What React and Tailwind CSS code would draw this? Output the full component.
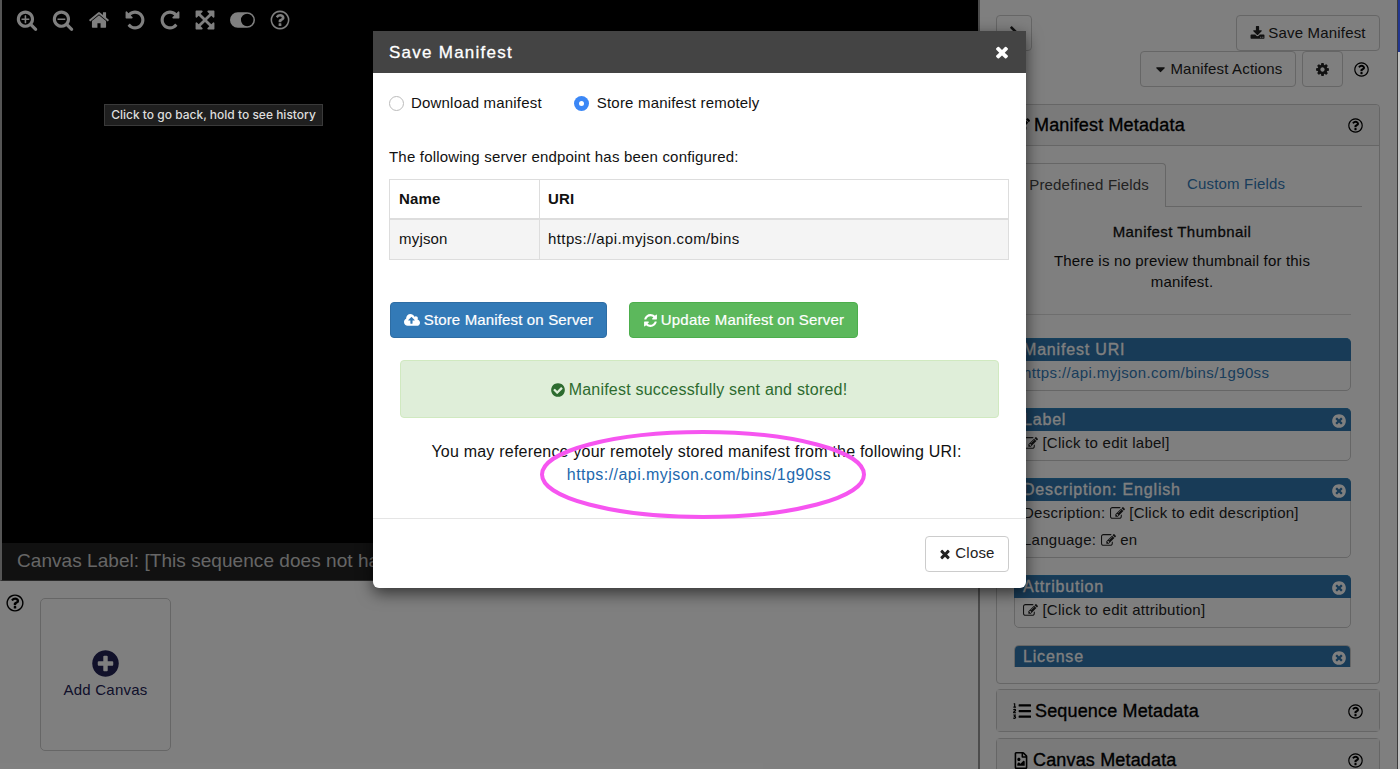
import React from "react";
import { FaListOl, FaRegFileImage, FaChevronRight } from "react-icons/fa";

const DISC =
  "M1664 896q0 209-103 385.5t-279.5 279.5-385.5 103-385.5-103-279.5-279.5-103-385.5 103-385.5 279.5-279.5 385.5-103 385.5 103 279.5 279.5 103 385.5z";
const LENS =
  "M1216 832q0-185-131.5-316.5t-316.5-131.5-316.5 131.5-131.5 316.5 131.5 316.5 316.5 131.5 316.5-131.5 131.5-316.5zm512 832q0 53-37.5 90.5t-90.5 37.5q-54 0-90-38l-343-342q-179 124-399 124-143 0-273.5-55.5t-225-150-150-225-55.5-273.5 55.5-273.5 150-225 225-150 273.5-55.5 273.5 55.5 225 150 150 225 55.5 273.5q0 220-124 399l343 343q37 37 37 90z";

const PATHS = {
  zoomIn:
    "M1088 800v64q0 13-9.5 22.5t-22.5 9.5h-224v224q0 13-9.5 22.5t-22.5 9.5h-64q-13 0-22.5-9.5t-9.5-22.5v-224h-224q-13 0-22.5-9.5t-9.5-22.5v-64q0-13 9.5-22.5t22.5-9.5h224v-224q0-13 9.5-22.5t22.5-9.5h64q13 0 22.5 9.5t9.5 22.5v224h224q13 0 22.5 9.5t9.5 22.5z" + LENS,
  zoomOut:
    "M1088 800v64q0 13-9.5 22.5t-22.5 9.5h-576q-13 0-22.5-9.5t-9.5-22.5v-64q0-13 9.5-22.5t22.5-9.5h576q13 0 22.5 9.5t9.5 22.5z" + LENS,
  home:
    "M1472 992v480q0 26-19 45t-45 19h-384v-384h-256v384h-384q-26 0-45-19t-19-45v-480q0-1 .5-3t.5-3l575-474 575 474q1 2 1 6zm223-69l-62 74q-8 9-21 11h-3q-13 0-21-7l-692-577-692 577q-12 8-24 7-13-2-21-11l-62-74q-8-10-7-23.5t11-21.5l719-599q32-26 76-26t76 26l244 204v-195q0-14 9-23t23-9h192q14 0 23 9t9 23v408l219 182q10 8 11 21.5t-7 23.5z",
  undo:
    "M1664 896q0 156-61 298t-164 245-245 164-298 61q-172 0-327-72.5t-264-204.5q-7-10-6.5-22.5t8.5-20.5l137-138q10-9 25-9 16 2 23 12 73 95 179 147t225 52q104 0 198.5-40.5t163.5-109.5 109.5-163.5 40.5-198.5-40.5-198.5-109.5-163.5-163.5-109.5-198.5-40.5q-98 0-188 35.5t-160 101.5l137 138q31 30 14 69-17 40-59 40h-448q-26 0-45-19t-19-45v-448q0-42 40-59 39-17 69 14l130 129q107-101 244.5-156.5t284.5-55.5q156 0 298 61t245 164 164 245 61 298z",
  redo:
    "M1664 256v448q0 26-19 45t-45 19h-448q-42 0-59-40-17-39 14-69l138-138q-148-137-349-137-104 0-198.5 40.5t-163.5 109.5-109.5 163.5-40.5 198.5 40.5 198.5 109.5 163.5 163.5 109.5 198.5 40.5q119 0 225-52t179-147q7-10 23-12 15 0 25 9l137 138q9 8 9.5 20.5t-7.5 22.5q-109 132-264 204.5t-327 72.5q-156 0-298-61t-245-164-164-245-61-298 61-298 164-245 245-164 298-61q147 0 284.5 55.5t244.5 156.5l130-129q29-31 70-14 39 17 39 59z",
  expand:
    "M1411 541l-355 355 355 355 144-144q29-31 70-14 39 17 39 59v448q0 26-19 45t-45 19h-448q-42 0-59-40-17-39 14-69l144-144-355-355-355 355 144 144q31 30 14 69-17 40-59 40h-448q-26 0-45-19t-19-45v-448q0-42 40-59 39-17 69 14l144 144 355-355-355-355-144 144q-19 19-45 19-12 0-24-5-40-17-40-59v-448q0-26 19-45t45-19h448q42 0 59 40 17 39-14 69l-144 144 355 355 355-355-144-144q-31-30-14-69 17-40 59-40h448q26 0 45 19t19 45v448q0 42-39 59-13 5-25 5-26 0-45-19z",
  help:
    "M1008 1200v160q0 14-9 23t-23 9h-160q-14 0-23-9t-9-23v-160q0-14 9-23t23-9h160q14 0 23 9t9 23zm256-496q0 50-15 90t-45.5 69-52 44-59.5 36q-32 18-46.5 28t-26 24-11.5 29v32q0 14-9 23t-23 9h-160q-14 0-23-9t-9-23v-68q0-35 10.5-64.5t24-47.5 39-35.5 41-25.5 44.5-21q53-25 75-43t22-49q0-42-43.5-71.5t-95.5-29.5q-56 0-95 27-29 20-80 83-9 12-25 12-11 0-19-6l-108-82q-10-7-12-20t5-23q122-192 349-192 129 0 238.5 89.5t109.5 214.5zm-368-448q-130 0-248.5 51t-204 136.5-136.5 204-51 248.5 51 248.5 136.5 204 204 136.5 248.5 51 248.5-51 204-136.5 136.5-204 51-248.5-51-248.5-136.5-204-204-136.5-248.5-51z" + DISC,
  times:
    "M1490 1322q0 40-28 68l-136 136q-28 28-68 28t-68-28l-294-294-294 294q-28 28-68 28t-68-28l-136-136q-28-28-28-68t28-68l294-294-294-294q-28-28-28-68t28-68l136-136q28-28 68-28t68 28l294 294 294-294q28-28 68-28t68 28l136 136q28 28 28 68t-28 68l-294 294 294 294q28 28 28 68z",
  timesCircle:
    "M1277 1122q0-26-19-45l-181-181 181-181q19-19 19-45 0-27-19-46l-90-90q-19-18-46-18-26 0-45 18l-181 181-181-181q-19-18-45-18-27 0-46 18l-90 90q-19 19-19 46 0 26 19 45l181 181-181 181q-19 19-19 45 0 27 19 46l90 90q19 18 46 18 26 0 45-18l181-181 181 181q19 18 45 18 27 0 46-18l90-90q19-19 19-46z" + DISC,
  checkCircle:
    "M1412 734q0-28-18-46l-91-90q-19-19-45-19t-45 19l-408 407-226-226q-19-19-45-19t-45 19l-91 90q-18 18-18 46 0 27 18 45l362 362q19 19 45 19 27 0 46-19l543-543q18-18 18-45z" + DISC,
  plusCircle:
    "M1344 960v-128q0-26-19-45t-45-19h-256v-256q0-26-19-45t-45-19h-128q-26 0-45 19t-19 45v256h-256q-26 0-45 19t-19 45v128q0 26 19 45t45 19h256v256q0 26 19 45t45 19h128q26 0 45-19t19-45v-256h256q26 0 45-19t19-45z" + DISC,
  download:
    "M1344 1344q0-26-19-45t-45-19-45 19-19 45 19 45 45 19 45-19 19-45zm256 0q0-26-19-45t-45-19-45 19-19 45 19 45 45 19 45-19 19-45zm128-224v320q0 40-28 68t-68 28h-1472q-40 0-68-28t-28-68v-320q0-40 28-68t68-28h465l135 136q58 56 136 56t136-56l136-136h464q40 0 68 28t28 68zm-325-569q17 41-14 70l-448 448q-18 19-45 19t-45-19l-448-448q-31-29-14-70 17-39 59-39h256v-448q0-26 19-45t45-19h256q26 0 45 19t19 45v448h256q42 0 59 39z",
  cog:
    "M1152 896q0-106-75-181t-181-75-181 75-75 181 75 181 181 75 181-75 75-181zm512-109v222q0 12-8 23t-20 13l-185 28q-19 54-39 91 35 50 107 138 10 12 10 25t-9 23q-27 37-99 108t-94 71q-12 0-26-9l-138-108q-44 23-91 38-16 136-29 186-7 28-36 28h-222q-14 0-24.5-8.5t-11.5-21.5l-28-184q-49-16-90-37l-141 107q-10 9-25 9-14 0-25-11-126-114-165-168-7-10-7-23 0-12 8-23 15-21 51-66.5t54-70.5q-27-50-41-99l-183-27q-13-2-21-12.5t-8-23.5v-222q0-12 8-23t19-13l186-28q14-46 39-92-40-57-107-138-10-12-10-24 0-10 9-23 26-36 98.5-107.5t94.5-71.5q13 0 26 10l138 107q44-23 91-38 16-136 29-186 7-28 36-28h222q14 0 24.5 8.5t11.5 21.5l28 184q49 16 90 37l142-107q9-9 24-9 13 0 25 10 129 119 165 170 7 8 7 22 0 12-8 23-15 21-51 66.5t-54 70.5q26 50 41 98l183 28q13 2 21 12.5t8 23.5z",
  refresh:
    "M1639 1056q0 5-1 7-64 268-268 434.5t-478 166.5q-146 0-282.5-55t-243.5-157l-129 129q-19 19-45 19t-45-19-19-45v-448q0-26 19-45t45-19h448q26 0 45 19t19 45-19 45l-137 137q71 66 161 102t187 36q134 0 250-65t186-179q11-17 53-117 8-23 30-23h192q13 0 22.5 9.5t9.5 22.5zm25-800v448q0 26-19 45t-45 19h-448q-26 0-45-19t-19-45 19-45l138-138q-148-137-349-137-134 0-250 65t-186 179q-11 17-53 117-8 23-30 23h-199q-13 0-22.5-9.5t-9.5-22.5v-7q65-268 270-434.5t480-166.5q146 0 284 55.5t245 156.5l130-129q19-19 45-19t45 19 19 45z",
  cloud:
    "M1280 864q0-14-9-23l-352-352q-9-9-23-9t-23 9l-351 351q-10 12-10 24 0 14 9 23t23 9h224v352q0 13 9.5 22.5t22.5 9.5h192q13 0 22.5-9.5t9.5-22.5v-352h224q13 0 22.5-9.5t9.5-22.5zm640 288q0 159-112.5 271.5t-271.5 112.5h-1088q-185 0-316.5-131.5t-131.5-316.5q0-130 70-240t188-165q-2-30-2-43 0-212 150-362t362-150q156 0 285.5 87t188.5 231q71-62 166-62 106 0 181 75t75 181q0 76-41 138 130 31 213.5 135.5t83.5 238.5z",
  edit:
    "M888 1184l116-116-152-152-116 116v56h96v96h56zm440-720q-16-16-33 1l-350 350q-17 17-1 33t33-1l350-350q17-17 1-33zm80 594v190q0 119-84.5 203.5t-203.5 84.5h-832q-119 0-203.5-84.5t-84.5-203.5v-832q0-119 84.5-203.5t203.5-84.5h832q63 0 117 25 15 7 18 23 3 17-9 29l-49 49q-14 14-32 8-23-6-45-6h-832q-66 0-113 47t-47 113v832q0 66 47 113t113 47h832q66 0 113-47t47-113v-126q0-13 9-22l64-64q15-15 35-7t20 29zm-96-738l288 288-672 672h-288v-288zm444 132l-92 92-288-288 92-92q28-28 68-28t68 28l152 152q28 28 28 68t-28 68z",
  toggle:
    "M640 256h768a640 640 0 0 1 0 1280h-768a640 640 0 0 1 0-1280zM1408 384a512 512 0 1 0 0 1024a512 512 0 1 0 0-1024z",
  caret:
    "M1408 704q0 26-19 45l-448 448q-19 19-45 19t-45-19l-448-448q-19-19-19-45t19-45 45-19h896q26 0 45 19t19 45z",
};

function Icon({ name, className = "", w = 1792 }) {
  return (
    <svg viewBox={`0 0 ${w} 1792`} fill="currentColor" fillRule="evenodd" className={`shrink-0 overflow-visible ${className}`}>
      <path d={PATHS[name]} />
    </svg>
  );
}

const btn = "flex h-9 items-center rounded-[4px] border border-[#ccc] bg-white text-[#222]";

function Toolbar() {
  return (
    <div className="flex h-10 items-center pl-[14px] text-white">
      <Icon name="zoomIn" className="size-[22px]" />
      <Icon name="zoomOut" className="ml-[14px] size-[22px]" />
      <Icon name="home" className="ml-[14px] size-[22px]" />
      <Icon name="undo" className="ml-[14px] size-[22px]" />
      <Icon name="redo" className="ml-[13px] size-[22px]" />
      <Icon name="expand" className="ml-[13px] size-[22px]" />
      <Icon name="toggle" w={2048} className="ml-[14px] h-[22px] w-[25px]" />
      <Icon name="help" className="ml-[14px] size-[22px]" />
    </div>
  );
}

function Viewer() {
  return (
    <main className="flex w-[980px] shrink-0 flex-col border-r-2 border-[#999]">
      <section className="flex h-[581px] flex-col justify-between border-b border-l-2 border-b-[#555] border-l-[#aaa] bg-black">
        <Toolbar />
        <div className="flex h-[37px] items-center overflow-hidden bg-[#222] pl-[15px] text-[19px] tracking-[0.05px] whitespace-nowrap text-[#ccc]">
          Canvas Label: [This sequence does not have canvases]
        </div>
      </section>
      <section className="flex flex-1 pl-[5px] text-black">
        <Icon name="help" className="mt-3 size-[20px]" />
        <div className="mt-[17px] ml-[15px] flex h-[153px] w-[131px] flex-col items-center rounded-[5px] border border-[#ccc] pt-[49px] text-[#225]">
          <Icon name="plusCircle" className="size-[31px]" />
          <span className="mt-px text-[15px] leading-[20px] tracking-[0.25px]">Add Canvas</span>
        </div>
      </section>
    </main>
  );
}

function Card({ title, closable = true, className = "", children }) {
  return (
    <div className={`rounded-[5px] border border-[#ccc] ${className}`}>
      <div className="-mx-px -mt-px flex h-[23px] items-center justify-between rounded-t-[5px] border-t border-[#2a80b9] bg-[#3176ae] pr-1 pl-[9px] text-[16px] tracking-[0.82px] text-white [-webkit-text-stroke:0.3px]">
        <span>{title}</span>
        {closable && <Icon name="timesCircle" className="mt-px size-[16px]" />}
      </div>
      {children}
    </div>
  );
}

function Editable({ label, children }) {
  return (
    <div className="flex h-[27px] items-center px-2 pb-[3px] tracking-[0.26px] whitespace-pre text-[#222]">
      {label && <span>{label} </span>}
      <Icon name="edit" className="size-[15px]" />
      <span> {children}</span>
    </div>
  );
}

function PanelHeading({ icon, title, className = "" }) {
  return (
    <div className={`flex h-[41px] items-center bg-[#f5f5f5] pt-px pr-[15px] pl-4 text-[18px] text-black ${className}`}>
      {icon}
      <span className="tracking-[0.16px] [-webkit-text-stroke:0.35px]">{title}</span>
      <Icon name="help" className="ml-auto size-[17px]" />
    </div>
  );
}

function Sidebar() {
  return (
    <aside className="flex w-[418px] shrink-0 flex-col border-r border-[#777] pr-[17px] pl-4 text-[15px] tracking-[0.18px]">
      <div className="mt-[15px] flex justify-between">
        <button className={`${btn} w-9 justify-center`}>
          <FaChevronRight className="size-[17px]" />
        </button>
        <button className={`${btn} w-36 justify-center gap-[3px]`}>
          <Icon name="download" className="size-[15px]" />
          Save Manifest
        </button>
      </div>
      <div className="flex items-center justify-end pr-[10px]">
        <button className={`${btn} w-[156px] justify-center gap-[2px]`}>
          <Icon name="caret" className="size-[15px]" />
          Manifest Actions
        </button>
        <button className={`${btn} ml-[6px] w-[41px] justify-center`}>
          <Icon name="cog" className="size-[15px]" />
        </button>
        <Icon name="help" className="ml-[10px] size-[17px] text-black" />
      </div>

      <section className="mt-[17px] flex h-[580px] shrink-0 flex-col rounded-[4px] border border-[#ccc]">
        <PanelHeading
          title="Manifest Metadata"
          className="rounded-t-[4px] border-b border-[#ccc]"
          icon={<Icon name="edit" className="mr-1 size-[17px]" />}
        />
        <div className="mt-[17px] mr-[17px] flex h-[44px] text-[15px]">
          <div className="flex w-[169px] items-center justify-end rounded-tr-[4px] border-t border-r border-[#ccc] pr-4 pb-px text-[#444]">
            Predefined Fields
          </div>
          <div className="flex flex-1 items-center border-b border-[#ccc] pl-[21px] text-[#337ab7]">Custom Fields</div>
        </div>
        <div className="mt-[14px] pr-3 text-center leading-[21px] text-[#111]">
          <div className="tracking-[0.45px] [-webkit-text-stroke:0.3px]">Manifest Thumbnail</div>
          <div className="mx-auto mt-[8px] w-[270px]">There is no preview thumbnail for this manifest.</div>
        </div>
        <div className="mr-7 ml-[17px] h-[23px] border-b border-[#ddd]" />
        <div className="mr-7 ml-[17px] flex flex-col">
          <Card title="Manifest URI" closable={false} className="mt-[23px] h-[53px]">
            <div className="flex h-[25px] items-center px-2 tracking-[0.38px] text-[#337ab7]">https://api.myjson.com/bins/1g90ss</div>
          </Card>
          <Card title="Label" className="mt-[17px] h-[53px]">
            <Editable>[Click to edit label]</Editable>
          </Card>
          <Card title="Description: English" className="mt-[17px] h-20">
            <Editable label="Description:">[Click to edit description]</Editable>
            <Editable label="Language:">en</Editable>
          </Card>
          <Card title="Attribution" className="mt-[17px] h-[53px]">
            <Editable>[Click to edit attribution]</Editable>
          </Card>
          <Card title="License" className="mt-[17px] h-[22px] overflow-hidden rounded-b-none border-b-0" />
        </div>
      </section>

      <section className="mt-[5px] shrink-0 rounded-[4px] border border-[#ccc]">
        <PanelHeading title="Sequence Metadata" icon={<FaListOl className="mr-1 size-[18px]" />} />
      </section>
      <section className="mt-[6px] shrink-0 rounded-[4px] border border-[#ccc]">
        <PanelHeading title="Canvas Metadata" icon={<FaRegFileImage className="mr-1 h-[17px] w-4" />} />
      </section>
    </aside>
  );
}

function SaveDialog() {
  return (
    <div className="relative mt-[31px] ml-[373px] flex h-[557px] w-[653px] flex-col rounded-b-[6px] bg-white text-[15px] tracking-[0.19px] text-[#111] shadow-[0_5px_16px_rgba(0,0,0,0.6)]">
      <header className="flex h-[42px] items-center justify-between bg-[#444] pt-[2px] pr-[15px] pl-4 text-[17px] tracking-[1.25px] text-white">
        <span className="[-webkit-text-stroke:0.3px]">Save Manifest</span>
        <Icon name="times" className="-mt-[2px] size-[18px]" />
      </header>
      <div className="flex flex-1 flex-col px-4">
        <div className="mt-[19px] flex h-[22px] items-center">
          <span className="size-[15px] rounded-full border border-[#bbb]" />
          <span className="ml-[7px]">Download manifest</span>
          <span className="ml-8 flex size-[15px] items-center justify-center rounded-full bg-[#3b87f6]">
            <span className="size-[5px] rounded-full bg-white" />
          </span>
          <span className="ml-2">Store manifest remotely</span>
        </div>
        <p className="mt-8 leading-[22px]">The following server endpoint has been configured:</p>
        <div className="mt-[11px] grid h-[81px] w-[620px] grid-cols-[150px_1fr] grid-rows-[40px_39px] border border-[#ddd]">
          <div className="flex items-center border-r border-b-2 border-[#ddd] pt-px pl-[9px] font-bold">Name</div>
          <div className="flex items-center border-b-2 border-[#ddd] pt-px pl-[8px] font-bold">URI</div>
          <div className="flex items-center border-r border-[#ddd] bg-[#f4f4f4] pl-[9px]">myjson</div>
          <div className="flex items-center bg-[#f4f4f4] pl-2 tracking-[0.4px]">https://api.myjson.com/bins</div>
        </div>
        <div className="mt-[42px] flex gap-[22px] pl-px tracking-[0.15px] text-white [-webkit-text-stroke:0.2px]">
          <button className="flex h-9 w-[217px] items-center justify-center gap-1 rounded-[4px] border border-[#2e6da4] bg-[#337ab7]">
            <Icon name="cloud" w={1920} className="h-[15px] w-4" />
            Store Manifest on Server
          </button>
          <button className="flex h-9 w-[229px] items-center justify-center gap-[3px] rounded-[4px] border border-[#4cae4c] bg-[#5cb85c]">
            <Icon name="refresh" className="size-[15px]" />
            <span className="tracking-[0.2px]">Update Manifest on Server</span>
          </button>
        </div>
        <div className="mt-[22px] ml-[11px] flex h-[58px] w-[599px] items-center justify-center gap-[3px] rounded-[4px] border border-[#d0e9c0] bg-[#dfeed9] pt-px pr-[2px] text-[16px] tracking-[0.22px] text-[#2d6b2f]">
          <Icon name="checkCircle" className="size-4" />
          Manifest successfully sent and stored!
        </div>
        <div className="mt-[22px] text-center text-[16px] leading-[23px]">
          <div className="pr-[6px] tracking-[0.21px]">You may reference your remotely stored manifest from the following URI:</div>
          <div className="pr-px">
            <a className="tracking-[0.45px] text-[#2268ad]">https://api.myjson.com/bins/1g90ss</a>
          </div>
        </div>
      </div>
      <footer className="flex h-[70px] items-center justify-end border-t border-[#e5e5e5] pr-[17px]">
        <button className={`${btn} w-[84px] justify-center gap-[3px] pr-px`}>
          <Icon name="times" className="size-[14px]" />
          Close
        </button>
      </footer>
      <svg className="absolute top-[398px] left-[166px] h-[92px] w-[328px]" viewBox="0 0 328 92" fill="none">
        <ellipse cx="164" cy="45.5" rx="161" ry="42.5" stroke="#f655f0" strokeWidth="4" />
      </svg>
    </div>
  );
}

export default function App() {
  return (
    <div className="relative h-[769px] w-[1400px] overflow-hidden bg-white font-['Liberation_Sans',Arial,sans-serif]">
      <div className="flex h-full">
        <Viewer />
        <Sidebar />
      </div>
      <div className="absolute inset-0 bg-black/50">
        <SaveDialog />
      </div>
      <div className="absolute top-0 right-0 flex h-full w-[2px] flex-col bg-[#c4c4c4]">
        <div className="h-[52px] bg-[#22368f]" />
      </div>
      <div className="absolute top-[104px] left-[104px] flex h-[22px] w-[219px] items-center justify-center border border-[#3a3a3a] bg-[#1f1f1f] font-[Inter,sans-serif] text-[12px] font-medium tracking-[0px] whitespace-nowrap text-[#ddd]">
        Click to go back, hold to see history
      </div>
    </div>
  );
}
